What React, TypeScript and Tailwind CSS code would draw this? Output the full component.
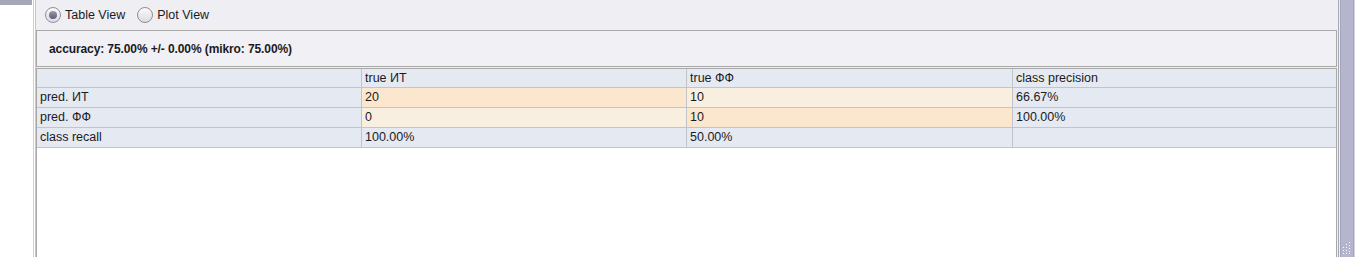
import React from 'react';

const rows = [
  { label: 'pred. ИТ', cells: ['20', '10', '66.67%'], tint: ['bg-[#fbe7cd]', 'bg-[#f9efe1]', 'bg-[#e5e9f2]'] },
  { label: 'pred. ФФ', cells: ['0', '10', '100.00%'], tint: ['bg-[#f9efe1]', 'bg-[#fbe7cd]', 'bg-[#e5e9f2]'] },
  { label: 'class recall', cells: ['100.00%', '50.00%', ''], tint: ['bg-[#e5e9f2]', 'bg-[#e5e9f2]', 'bg-[#e5e9f2]'] },
];

const Radio: React.FC<{ checked?: boolean; label: string }> = ({ checked, label }) => (
  <label className="flex items-center gap-[4px]">
    <span className="w-[16px] h-[16px] rounded-full border border-[#8e8e96] bg-gradient-to-b from-[#fafafa] to-[#dcdce2] flex items-center justify-center">
      {checked && <span className="w-[8px] h-[8px] rounded-full bg-gradient-to-b from-[#9a9ab0] to-[#5d5d78]" />}
    </span>
    <span>{label}</span>
  </label>
);

export default function App() {
  return (
    <div
      className="w-[1357px] h-[257px] flex bg-white overflow-hidden text-[12.5px] text-[#1b1b1f]"
      style={{ fontFamily: '"Liberation Sans", Arial, sans-serif' }}
    >
      {/* left strip */}
      <div className="w-[32px] shrink-0">
        <div className="h-[5px] bg-[#a6a6b9]" />
      </div>
      <div className="w-px shrink-0" />
      <div className="w-px shrink-0 bg-[#c5d2e2]" />
      <div className="w-px shrink-0" />

      {/* main panel */}
      <div className="w-[1303px] shrink-0 flex flex-col bg-[#eeeef3] border-l border-[#c6c6c6]">
        <div className="h-[30px] flex items-center gap-[12px] pl-[9px]">
          <Radio checked label="Table View" />
          <Radio label="Plot View" />
        </div>

        <div className="h-[37px] mr-[1px] border border-[#a9a9a9] bg-[#f0f0f5] flex items-center pl-[12px] text-[12px] tracking-[-0.1px] font-bold">
          accuracy: 75.00% +/- 0.00% (mikro: 75.00%)
        </div>

        <div className="flex-1 mt-px mr-[1px] border-l border-r border-t border-[#a9a9a9] bg-white">
          <div className="grid grid-cols-[324px_324px_325px_1fr] gap-px bg-[#c4c4c8] border-b border-[#c4c4c8]">
            <div className="h-[18px] bg-[#e5e9f2]" />
            <div className="h-[18px] bg-[#e5e9f2] pl-[3px] flex items-center">true ИТ</div>
            <div className="h-[18px] bg-[#e5e9f2] pl-[3px] flex items-center">true ФФ</div>
            <div className="h-[18px] bg-[#e5e9f2] pl-[3px] flex items-center">class precision</div>
            {rows.map((r) => (
              <React.Fragment key={r.label}>
                <div className="h-[19px] bg-[#e5e9f2] pl-[3px] flex items-center">{r.label}</div>
                {r.cells.map((c, i) => (
                  <div key={i} className={`h-[19px] pl-[3px] flex items-center ${r.tint[i]}`}>
                    {c}
                  </div>
                ))}
              </React.Fragment>
            ))}
          </div>
        </div>
      </div>

      {/* scrollbar */}
      <div className="flex-1 flex bg-white">
        <div className="w-px bg-[#a9a9b1]" />
        <div className="w-px bg-[#eeeef3]" />
        <div className="w-[14px] bg-[#b5b5cd] border-x border-[#a5a5bd] flex flex-col justify-end items-center pb-[3px]">
          <svg width="8" height="12" viewBox="0 0 8 12">
            {[
              [6, 0], [3, 2], [6, 3], [0, 5], [3, 5], [6, 6], [0, 8], [3, 8], [6, 9], [0, 11], [3, 11], [6, 11],
            ].map(([x, y], i) => (
              <rect key={i} x={x} y={y} width="1" height="1" fill="#ffffff" />
            ))}
          </svg>
        </div>
        <div className="w-px bg-[#d4d4de]" />
      </div>
    </div>
  );
}
